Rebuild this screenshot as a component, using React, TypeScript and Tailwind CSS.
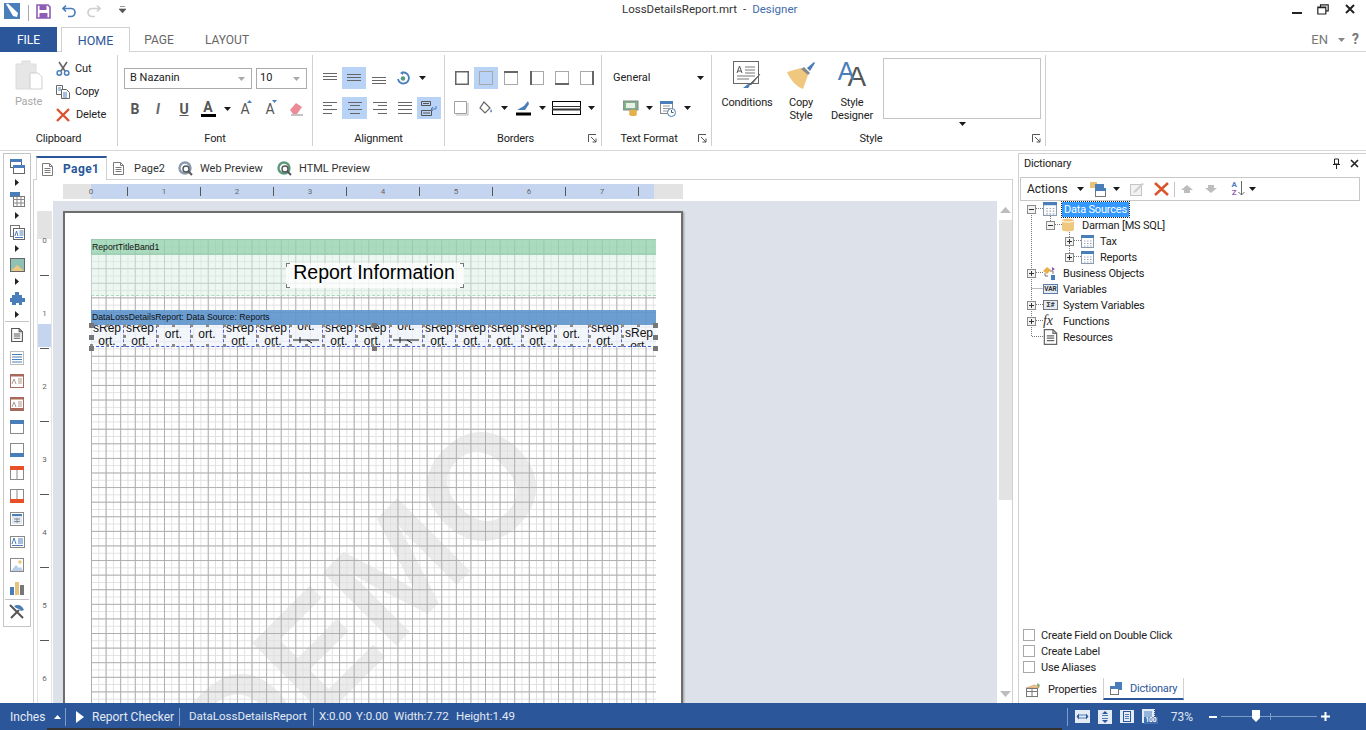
import React from "react";

const B = "#4a7ebb";

const Caret = ({ c = "#1a1a1a" }: { c?: string }) => (
  <svg width="7" height="4" viewBox="0 0 7 4"><path d="M0 0h7L3.5 4z" fill={c} /></svg>
);

const Launcher = () => (
  <svg width="9" height="9" viewBox="0 0 9 9"><path d="M.5 8V.5H8M3 3l5 5M8 4.5V8H4.5" fill="none" stroke="#555" /></svg>
);

const Lines = ({ rows, w = 16, h = 14 }: { rows: number[][]; w?: number; h?: number }) => (
  <svg width={w} height={h} viewBox={`0 0 ${w} ${h}`}>
    {rows.map((r, i) => <path key={i} d={`M${r[0]} ${r[2] + 0.5}H${r[1]}`} stroke="#666" />)}
  </svg>
);

const BorderBox = ({ side }: { side: string }) => (
  <svg width="14" height="14" viewBox="0 0 14 14">
    <rect x=".5" y=".5" width="13" height="13" fill="none" stroke={side === "all" ? "#666" : "#a8a8a8"} strokeWidth={side === "all" ? 2 : 1} />
    {side === "t" && <path d="M0 1h14" stroke="#666" strokeWidth="2" />}
    {side === "l" && <path d="M1 0v14" stroke="#666" strokeWidth="2" />}
    {side === "b" && <path d="M0 13h14" stroke="#666" strokeWidth="2" />}
    {side === "r" && <path d="M13 0v14" stroke="#666" strokeWidth="2" />}
  </svg>
);

const Win = ({ kind }: { kind: string }) => {
  const blue = "#4a7ebb";
  const red = "#e8502a";
  return (
    <svg width="14" height="14" viewBox="0 0 14 14">
      <rect x=".5" y=".5" width="13" height="13" fill="#fff" stroke="#8a8a8a" />
      {kind === "h" && <rect width="14" height="4" fill={blue} />}
      {kind === "f" && <rect y="10" width="14" height="4" fill={blue} />}
      {kind === "rh" && <><rect width="14" height="4" fill={red} /><path d="M7 4v10" stroke="#8a8a8a" /></>}
      {kind === "rf" && <><rect y="10" width="14" height="4" fill={red} /><path d="M7 0v10" stroke="#8a8a8a" /></>}
      {kind === "t" && <><rect x="2" y="2" width="10" height="10" fill="#dfe8f4" /><rect x="2" y="2" width="10" height="2" fill={blue} /><path d="M4 7h6M4 9.5h6M7 6v5" stroke="#8a8a8a" /></>}
    </svg>
  );
};

const Doc = ({ w = 11, h = 13, c = "#7a7a7a" }: { w?: number; h?: number; c?: string }) => (
  <svg width={w} height={h} viewBox="0 0 11 13">
    <path d="M.5.5h7l3 3v9H.5z" fill="#fff" stroke={c} />
    <path d="M7.5.5v3h3M2.5 5.5h6M2.5 7.5h6M2.5 9.5h6" fill="none" stroke={c} />
  </svg>
);

const Globe = ({ c }: { c: string }) => (
  <svg width="15" height="15" viewBox="0 0 15 15">
    <circle cx="7" cy="7" r="5.5" fill="#fff" stroke={c} strokeWidth="2.4" />
    <circle cx="8" cy="8" r="3" fill="#fff" stroke="#555" strokeWidth="1.4" />
    <path d="M10.5 10.5l3.5 3.5" stroke="#555" strokeWidth="2" />
  </svg>
);

const TableIc = ({ s = 13 }: { s?: number }) => (
  <svg width={s} height={s} viewBox="0 0 13 13">
    <rect x=".5" y=".5" width="12" height="12" fill="#fff" stroke="#8a9bb0" />
    <rect width="13" height="3" fill="#4a7ebb" />
    <path d="M3 6h1.5M6 6h1.5M9 6h1.5M3 8.5h1.5M6 8.5h1.5M9 8.5h1.5M3 11h1.5M6 11h1.5M9 11h1.5" stroke="#9aa8b8" />
  </svg>
);

const Exp = ({ minus }: { minus?: boolean }) => (
  <svg width="9" height="9" viewBox="0 0 9 9" className="shrink-0">
    <rect x=".5" y=".5" width="8" height="8" fill="#f2f2f2" stroke="#8a8a8a" />
    <path d="M2 4.5h5" stroke="#333" />
    {!minus && <path d="M4.5 2v5" stroke="#333" />}
  </svg>
);

function Group({ w, label, launcher, children }: { w: string; label: string; launcher?: boolean; children: React.ReactNode }) {
  return (
    <div className={`${w} h-[98px] flex flex-col shrink-0`}>
      <div className="h-[76px] overflow-visible">{children}</div>
      <div className={`relative h-[22px] flex items-center justify-center text-[#222] ${launcher ? "pr-[15px]" : ""}`}>
        {label}
        {launcher && <span className="absolute right-[4px] top-[6px] flex"><Launcher /></span>}
      </div>
    </div>
  );
}

const Sep = () => <div className="w-px h-[91px] mt-[3px] bg-[#d0d0d0] shrink-0" />;

function Cell({ w, on, children }: { w: string; on?: boolean; children: React.ReactNode }) {
  return <div className={`${w} h-[22px] flex items-center justify-center shrink-0 ${on ? "bg-[#b9d3f7]" : ""}`}>{children}</div>;
}

function TitleBar() {
  return (
    <div className="h-[27px] flex items-start shrink-0">
      <div className="w-[622px] flex items-start">
        <svg width="16" height="16" viewBox="0 0 16 16" className="ml-[4px] mt-[3px]">
          <rect width="16" height="16" fill="#4a7ebb" />
          <path d="M2 1l2-.5L14 10l-1 4-4-1z" fill="#fff" />
        </svg>
        <div className="w-px h-[16px] bg-[#a8a8a8] ml-[8px] mt-[5px]" />
        <svg width="15" height="15" viewBox="0 0 15 15" className="ml-[7px] mt-[4px]">
          <path d="M1 1h11l2 2v11H1z" fill="#fff" stroke="#8d5cb5" strokeWidth="1.6" />
          <rect x="3.5" y="1" width="7" height="5" fill="#8d5cb5" />
          <rect x="3.5" y="9" width="8" height="5" fill="#8d5cb5" />
        </svg>
        <svg width="15" height="14" viewBox="0 0 15 14" className="ml-[11px] mt-[4px]">
          <path d="M4 1.5L1 4.5l3 3M1.5 4.5H9a4 4 0 0 1 0 8H6" fill="none" stroke="#4a7ebb" strokeWidth="1.7" />
        </svg>
        <svg width="15" height="14" viewBox="0 0 15 14" className="ml-[9px] mt-[4px]">
          <path d="M11 1.5l3 3-3 3M13.5 4.5H6a4 4 0 0 0 0 8h3" fill="none" stroke="#cfcfcf" strokeWidth="1.7" />
        </svg>
        <svg width="7" height="7" viewBox="0 0 7 7" className="ml-[18px] mt-[6px]">
          <path d="M1 .5h5M0 3h7L3.5 7z" stroke="#555" fill="#555" strokeWidth=".6" />
        </svg>
      </div>
      <div className="text-[11.5px] leading-[19px] text-[#333] whitespace-pre">LossDetailsReport.mrt<span className="ml-[6px]">-</span><span className="ml-[6px] text-[#3f6cab]">Designer</span></div>
      <div className="ml-auto flex items-start">
        <div className="w-[10px] h-[2px] bg-[#222] mt-[12px]" />
        <svg width="12" height="11" viewBox="0 0 12 11" className="ml-[15px] mt-[4px]"><path d="M3.5 2.5V.8h7.7v6H9M.8 3h8v7H.8zM.8 3.6h8" fill="none" stroke="#222" strokeWidth="1.2" /></svg>
        <svg width="10" height="10" viewBox="0 0 10 10" className="ml-[16px] mr-[11px] mt-[4px]"><path d="M1 1l8 8M9 1l-8 8" stroke="#222" strokeWidth="2" /></svg>
      </div>
    </div>
  );
}

function TabsRow() {
  return (
    <div className="h-[25px] flex border-b border-[#d4d4d4] shrink-0 text-[12px] text-[#666]">
      <div className="w-[57px] h-[25px] pt-[1px] bg-[#2b579a] text-white flex items-center justify-center">FILE</div>
      <div className="ml-[4px] w-[69px] h-[25px] pt-[2px] bg-white border border-b-0 border-[#d0d0d0] text-[#2b579a] text-[12.5px] flex items-center justify-center">HOME</div>
      <div className="ml-[7px] w-[44px] pt-[1px] flex items-center justify-center">PAGE</div>
      <div className="ml-[23px] w-[46px] pt-[1px] flex items-center justify-center">LAYOUT</div>
      <div className="ml-auto flex items-center pt-[1px]">
        <span className="text-[#777] text-[13px]">EN</span>
        <span className="ml-[10px] flex"><Caret c="#888" /></span>
        <span className="ml-[7px] mr-[7px] font-bold text-[14px] text-[#777]">?</span>
      </div>
    </div>
  );
}

function Ribbon() {
  return (
    <div className="h-[99px] flex border-b border-[#d8d8d8] shrink-0 text-[11px] tracking-[-0.15px]">
      <Group w="w-[117px]" label="Clipboard">
        <div className="flex">
          <div className="ml-[12px] w-[33px] flex flex-col items-center pt-[8px]">
            <svg width="28" height="30" viewBox="0 0 28 30">
              <path d="M1 4h6V1h8v3h6v9h-6v16H1z" fill="#e6e6e6" stroke="#dcdcdc" />
              <path d="M15 13h8l4 4v12H15z" fill="#fff" stroke="#d0d0d0" />
            </svg>
            <span className="mt-[4px] text-[#a8a8a8]">Paste</span>
          </div>
          <div className="ml-[11px] pt-[5px] text-[#222]">
            <div className="h-[23px] flex items-center gap-[5px]">
              <svg width="14" height="15" viewBox="0 0 14 15"><path d="M3 1l6 9M11 1L5 10" stroke="#666" strokeWidth="1.6" /><circle cx="3.3" cy="12" r="2.2" fill="none" stroke={B} strokeWidth="1.5" /><circle cx="10.7" cy="12" r="2.2" fill="none" stroke={B} strokeWidth="1.5" /></svg>
              <span className="pt-[2px]">Cut</span>
            </div>
            <div className="h-[23px] flex items-center gap-[5px]">
              <svg width="14" height="14" viewBox="0 0 14 14"><path d="M.5.5h6v9h-6z" fill="#fff" stroke="#666" /><path d="M5.5 4.5h5l3 3v6h-8z" fill="#fff" stroke="#666" /><path d="M7 8h4M7 10h4M7 12h4M2 3h3M2 5h3" stroke="#4a7ebb" /></svg>
              <span className="pt-[2px]">Copy</span>
            </div>
            <div className="h-[23px] flex items-center gap-[6px]">
              <svg width="14" height="14" viewBox="0 0 14 14"><path d="M1 1l12 12M13 1L1 13" stroke="#d9552d" strokeWidth="2.4" /></svg>
              <span className="pt-[2px]">Delete</span>
            </div>
          </div>
        </div>
      </Group>
      <Sep />
      <Group w="w-[194px]" label="Font">
        <div className="pl-[6px] pt-[16px]">
          <div className="flex gap-[4px]">
            <div className="w-[128px] h-[21px] border border-[#ababab] flex items-center justify-between pl-[5px] pr-[6px] text-[#222] tracking-normal">B Nazanin <Caret c="#aaa" /></div>
            <div className="w-[51px] h-[21px] border border-[#ababab] flex items-center justify-between pl-[3px] pr-[6px] text-[#222] tracking-normal">10 <Caret c="#aaa" /></div>
          </div>
          <div className="flex mt-[9px] text-[14px] text-[#555]">
            <Cell w="w-[22px]"><b>B</b></Cell>
            <Cell w="w-[24px]"><i className="font-bold text-[#666]">I</i></Cell>
            <Cell w="w-[28px]"><span className="font-bold underline">U</span></Cell>
            <Cell w="w-[20px]"><span className="flex flex-col items-center leading-[12px] font-bold">A<span className="w-[15px] h-[3px] bg-black mt-[1px]" /></span></Cell>
            <Cell w="w-[18px]"><Caret /></Cell>
            <Cell w="w-[18px]"><span className="relative text-[14px]">A<span className="absolute -right-[3px] top-[1px] flex"><svg width="5" height="3" viewBox="0 0 5 3"><path d="M2.5 0L5 3H0z" fill={B} /></svg></span></span></Cell>
            <Cell w="w-[32px]"><span className="relative text-[14px]">A<span className="absolute -right-[3px] top-[1px] flex"><svg width="5" height="3" viewBox="0 0 5 3"><path d="M2.5 3L5 0H0z" fill={B} /></svg></span></span></Cell>
            <Cell w="w-[20px]">
              <svg width="15" height="14" viewBox="0 0 15 14"><path d="M1 8l6-7 6 4-5 7H4z" fill="#ec8a97" /><path d="M2 13h12" stroke="#888" /></svg>
            </Cell>
          </div>
        </div>
      </Group>
      <Sep />
      <Group w="w-[131px]" label="Alignment">
        <div className="pl-[4px] pt-[15px]">
          <div className="flex">
            <Cell w="w-[25px]"><Lines rows={[[1, 15, 2], [1, 15, 5], [1, 15, 8]]} /></Cell>
            <Cell w="w-[24px]" on><Lines rows={[[1, 15, 3], [1, 15, 6], [1, 15, 9]]} /></Cell>
            <Cell w="w-[25px]"><Lines rows={[[1, 15, 6], [1, 15, 9], [1, 15, 12]]} /></Cell>
            <Cell w="w-[24px]">
              <svg width="14" height="14" viewBox="0 0 14 14"><path d="M7 1.5A5.5 5.5 0 1 1 2 8" fill="none" stroke={B} strokeWidth="1.8" /><path d="M7 0v4L4 2z" fill={B} /><circle cx="7" cy="7.5" r="2.3" fill="#5a9a8a" /></svg>
            </Cell>
            <Cell w="w-[14px]"><Caret /></Cell>
          </div>
          <div className="flex mt-[8px]">
            <Cell w="w-[25px]"><Lines rows={[[1, 15, 1], [1, 10, 4], [1, 15, 8], [1, 10, 12]]} /></Cell>
            <Cell w="w-[25px]" on><Lines rows={[[1, 15, 1], [3, 13, 4], [1, 15, 8], [3, 13, 12]]} /></Cell>
            <Cell w="w-[25px]"><Lines rows={[[1, 15, 1], [6, 15, 4], [1, 15, 8], [6, 15, 12]]} /></Cell>
            <Cell w="w-[25px]"><Lines rows={[[1, 15, 1], [1, 15, 4], [1, 15, 8], [1, 15, 12]]} /></Cell>
            <Cell w="w-[24px]" on>
              <svg width="16" height="15" viewBox="0 0 16 15"><path d="M.5.5h9v4h-9zM.5 9.500h10v5H.5z" fill="none" stroke="#555" /><path d="M2 2.500h6M2 12h7" stroke="#555" /><path d="M15 5v3h-5M12 6l-2 2 2 2" fill="none" stroke={B} /></svg>
            </Cell>
          </div>
        </div>
      </Group>
      <Sep />
      <Group w="w-[156px]" label="Borders" launcher>
        <div className="pl-[4px] pt-[15px]">
          <div className="flex">
            <Cell w="w-[25px]"><BorderBox side="all" /></Cell>
            <Cell w="w-[24px]" on><BorderBox side="none" /></Cell>
            <Cell w="w-[26px]"><BorderBox side="t" /></Cell>
            <Cell w="w-[25px]"><BorderBox side="l" /></Cell>
            <Cell w="w-[25px]"><BorderBox side="b" /></Cell>
            <Cell w="w-[25px]"><BorderBox side="r" /></Cell>
          </div>
          <div className="flex mt-[8px]">
            <Cell w="w-[25px]">
              <svg width="15" height="15" viewBox="0 0 15 15"><path d="M.5.5h12v12H.5z" fill="#fff" stroke="#a0a0a0" /><path d="M14 2v12H2" fill="none" stroke="#bbb" /></svg>
            </Cell>
            <Cell w="w-[23px]">
              <svg width="15" height="14" viewBox="0 0 15 14"><path d="M6 1l6 6-5 5-5-5z" fill="#fff" stroke="#666" strokeWidth="1.2" /><path d="M13 8c1 2 1.500 3 0 3.500C12 11 12 10 13 8z" fill={B} /></svg>
            </Cell>
            <Cell w="w-[14px]"><Caret /></Cell>
            <Cell w="w-[24px]">
              <svg width="15" height="16" viewBox="0 0 15 16"><path d="M1 10l7-4 4-5 1 3-4 6H3z" fill={B} /><rect y="12.500" width="15" height="3" fill="#000" /></svg>
            </Cell>
            <Cell w="w-[14px]"><Caret /></Cell>
            <Cell w="w-[35px]">
              <svg width="29" height="14" viewBox="0 0 29 14"><rect x=".5" y=".5" width="28" height="13" fill="#fff" stroke="#000" /><path d="M0 5.500h29" stroke="#333" /><path d="M0 8.500h29" stroke="#333" strokeWidth="2" /></svg>
            </Cell>
            <Cell w="w-[14px]"><Caret /></Cell>
          </div>
        </div>
      </Group>
      <Sep />
      <Group w="w-[109px]" label="Text Format" launcher>
        <div className="pt-[15px]">
          <div className="h-[22px] pl-[11px] pr-[7px] flex items-center justify-between text-[#222] tracking-normal">General <Caret /></div>
          <div className="flex mt-[8px] pl-[18px]">
            <Cell w="w-[22px]">
              <svg width="16" height="16" viewBox="0 0 16 16"><rect x="0" y="1" width="15" height="9" fill="#7fb08a" stroke="#888" /><rect x="3" y="3" width="9" height="5" fill="#e8f0e8" /><ellipse cx="10" cy="11.500" rx="4" ry="2" fill="#e4b14a" /><ellipse cx="10" cy="14" rx="4" ry="2" fill="#e4b14a" /></svg>
            </Cell>
            <Cell w="w-[14px]"><Caret /></Cell>
            <Cell w="w-[24px]">
              <svg width="16" height="17" viewBox="0 0 16 17"><rect x=".5" y="1.500" width="12" height="12" fill="#fff" stroke="#888" /><rect y="1" width="13" height="3" fill={B} /><path d="M3 6h7M3 8.500h7M3 11h7" stroke="#999" /><circle cx="11.500" cy="12.500" r="4" fill="#fff" stroke={B} /><path d="M11.500 10v2.500h2" fill="none" stroke="#555" /></svg>
            </Cell>
            <Cell w="w-[14px]"><Caret /></Cell>
          </div>
        </div>
      </Group>
      <Sep />
      <Group w="w-[333px]" label="Style" launcher>
        <div className="flex pt-[6px] pl-[5px] text-[#222]">
          <div className="w-[60px] flex flex-col items-center leading-[13px] text-center pt-[3px]">
            <svg width="28" height="29" viewBox="0 0 28 29"><rect x=".5" y=".5" width="25" height="22" fill="#fff" stroke="#666" /><path d="M12 6h10M12 9h10M12 12h10M4 15h18M4 18h12" stroke="#777" /><path d="M4 12l2.500-7L9 12M5 10h3" fill="none" stroke="#555" /><path d="M27 13l-9 9-2 2 3-1z" fill="#666" stroke="#666" /><path d="M16 23c-2 0-3 2-6 4h5c1-1 2-2 1-4z" fill={B} /></svg>
            <span className="mt-[6px]">Conditions</span>
          </div>
          <div className="w-[48px] flex flex-col items-center leading-[13px] text-center pt-[3px]">
            <svg width="30" height="29" viewBox="0 0 30 29"><path d="M1 11l14-4 7 7-5 14C11 26 4 19 1 11z" fill="#f0c77e" /><path d="M15 8l3-2 6 6-2 2z" fill="#888" /><path d="M21 7l7-6 1 1-5 8z" fill={B} /></svg>
            <span className="mt-[6px]">Copy<br />Style</span>
          </div>
          <div className="w-[54px] flex flex-col items-center leading-[13px] text-center pt-[2px]">
            <div className="h-[30px] w-[30px] flex items-end justify-center font-['Liberation_Sans',sans-serif] tracking-normal">
              <span className="text-[25px] leading-[25px] text-[#4a7ebb] -mr-[7px] -translate-y-[6px]">A</span>
              <span className="text-[28px] leading-[26px] text-[#555]">A</span>
            </div>
            <span className="mt-[6px]">Style<br />Designer</span>
          </div>
          <div className="ml-[4px] flex flex-col items-center">
            <div className="w-[158px] h-[61px] border border-[#c4c4c4] bg-white" />
            <span className="mt-[3px] flex"><Caret /></span>
          </div>
        </div>
      </Group>
      <Sep />
    </div>
  );
}

const IconArrow = () => (
  <div className="h-[9px] flex items-center justify-center">
    <svg width="4" height="7" viewBox="0 0 4 7"><path d="M0 0l4 3.500L0 7z" fill="#222" /></svg>
  </div>
);

const TI = ({ children }: { children: React.ReactNode }) => <div className="h-[23px] flex items-center justify-center">{children}</div>;
const TA = ({ children }: { children: React.ReactNode }) => <><div className="h-[24px] flex items-center justify-center">{children}</div><IconArrow /></>;

function LeftBar() {
  const brown = "#a8695a";
  return (
    <div className="w-[33px] shrink-0 pl-[3px] pt-[3px]">
      <div className="w-[28px] h-[474px] border border-[#c4c4c4] -mt-px">
        <TA><svg width="15" height="15" viewBox="0 0 15 15"><rect x=".5" y=".5" width="11" height="8" fill="#fff" stroke="#666" /><rect width="12" height="3" fill={B} /><rect x="3.500" y="6.500" width="11" height="8" fill="#fff" stroke="#666" /><rect x="3" y="6" width="12" height="3" fill={B} /></svg></TA>
        <TA><svg width="15" height="15" viewBox="0 0 15 15"><rect width="10" height="5" fill={B} /><rect x="3.500" y="4.500" width="11" height="10" fill="#fff" stroke="#777" /><path d="M3 7.500h12M3 11h12M7 5v10M11 5v10" stroke="#888" /></svg></TA>
        <TA><svg width="15" height="15" viewBox="0 0 15 15"><rect x=".5" y=".5" width="9" height="11" fill="#fff" stroke="#777" /><rect x="3.500" y="3.500" width="11" height="11" fill="#fff" stroke="#666" /><path d="M5 11l1.500-5L8 11M9.500 6h4M9.500 8h4M9.500 10h4M5 12.500h8" fill="none" stroke={B} /></svg></TA>
        <TA><svg width="15" height="14" viewBox="0 0 15 14"><rect x=".5" y=".5" width="14" height="13" fill="#8fc1b5" stroke="#666" /><path d="M1 13l6-6 7 6z" fill="#f0c77e" /></svg></TA>
        <TA><svg width="15" height="15" viewBox="0 0 15 15"><path d="M5 1h4v3h3v3h3v4h-3v3H9v-2H6v2H2v-3H0V7h2V4h3z" fill={B} /></svg></TA>
        <div className="h-px bg-[#c4c4c4] mx-[1px] mt-[2px] mb-[1px]" />
        <TI><Doc w={14} h={14} c="#555" /></TI>
        <TI><svg width="14" height="14" viewBox="0 0 14 14"><rect x=".5" y=".5" width="13" height="13" fill="#fff" stroke="#777" strokeDasharray="1 1" /><path d="M2 3.500h10M2 6h10M2 8.500h10M2 11h10" stroke={B} /></svg></TI>
        {[0, 1].map((i) => (
          <TI key={i}><svg width="14" height="14" viewBox="0 0 14 14"><rect x=".5" y=".5" width="13" height="13" fill="#fff" stroke={brown} /><rect width="14" height="2.500" fill={brown} />{i === 1 && <rect y="11" width="14" height="3" fill={brown} />}<path d="M2 10l2-5 2 5M8 5h4M8 7h4M8 9h4" fill="none" stroke="#a89a94" /></svg></TI>
        ))}
        <TI><Win kind="h" /></TI>
        <TI><Win kind="f" /></TI>
        <TI><Win kind="rh" /></TI>
        <TI><Win kind="rf" /></TI>
        <TI><Win kind="t" /></TI>
        <TI><svg width="15" height="12" viewBox="0 0 15 12"><rect x=".5" y=".5" width="14" height="11" fill="#fff" stroke="#888" /><path d="M2 8l2-6 2 6M8 3h5M8 5h5M8 7h5M2 9.500h11" fill="none" stroke={B} /></svg></TI>
        <TI><svg width="14" height="14" viewBox="0 0 14 14"><rect x=".5" y=".5" width="13" height="13" fill="#fff" stroke="#888" /><circle cx="10" cy="4" r="1.800" fill="#f0c77e" /><path d="M1 13l5-6 3 3 2-1 2 4z" fill="#b9cfe8" /></svg></TI>
        <TI><svg width="14" height="14" viewBox="0 0 14 14"><rect y="6" width="4" height="8" fill={B} /><rect x="5" y="1" width="4" height="13" fill="#e9c27a" /><rect x="10" y="4" width="4" height="10" fill="#777" /></svg></TI>
        <div className="h-px bg-[#c4c4c4] mx-[1px]" />
        <TI><svg width="16" height="15" viewBox="0 0 16 15"><path d="M2 14L10 6M1 1l13 13" stroke="#555" strokeWidth="2" /><path d="M5 2c4-2 8-1 10 4l-3 1-2-2-3-1z" fill={B} /></svg></TI>
      </div>
    </div>
  );
}

type Kind = "two" | "one" | "line" | "low";
const cells: Kind[] = ["two", "two", "one", "one", "two", "two", "line", "two", "two", "line", "two", "two", "two", "two", "one", "two", "low"];
const cellW = ["w-[33px]", "w-[33px]", "w-[34px]", "w-[33px]", "w-[33px]", "w-[33px]", "w-[33px]", "w-[33px]", "w-[34px]", "w-[33px]", "w-[33px]", "w-[33px]", "w-[33px]", "w-[33px]", "w-[34px]", "w-[33px]", "w-[34px]"];

const H = ({ cls }: { cls: string }) => <span className={`absolute w-[3px] h-[3px] bg-[#8a8a8a] z-10 ${cls}`} />;

function DataCell({ k, w, last }: { k: Kind; w: string; last: boolean }) {
  return (
    <div className={`relative ${w} h-[22px] shrink-0`}>
      <div className={`h-[22px] flex flex-col items-center overflow-hidden bg-[#f1f6fb]/85 text-[12px] leading-[13px] text-[#111] ${last ? "" : "border-r border-dashed border-[#5a5ae0]"} ${k === "two" || k === "one" ? "justify-center" : "justify-start"}`}>
        {k === "two" && <><span className="-mt-[3px]">sRep</span><span>ort.</span></>}
        {k === "one" && <span className="-mt-[3px]">ort.</span>}
        {k === "line" && (
          <>
            <span className="-mt-[5px]">ort.</span>
            <svg width="28" height="8" viewBox="0 0 28 8" className="mt-[3px] shrink-0"><path d="M1 4h26M8 1v6M20 7l-5-3" stroke="#111" fill="none" /></svg>
          </>
        )}
        {k === "low" && <><span className="mt-[2px]">sRep</span><span>ort.</span></>}
      </div>
      <H cls="-left-[1px] -top-[1px]" />
      <H cls="left-[15px] -top-[1px]" />
      <H cls="-left-[1px] top-[10px]" />
      <H cls="-left-[1px] bottom-0" />
      <H cls="left-[15px] bottom-0" />
    </div>
  );
}

const Big = ({ cls }: { cls: string }) => <span className={`absolute w-[5px] h-[5px] bg-[#777] z-20 ${cls}`} />;

function Bracket({ cls }: { cls: string }) {
  return <span className={`absolute w-[4px] h-[4px] border-[#777] ${cls}`} />;
}

function GridArea() {
  return (
    <div className="relative w-[565px] h-[600px]">
      <div className="absolute inset-0 overflow-hidden">
        <div className="absolute left-[48px] top-[290px] w-[450px] h-[150px] -rotate-45 text-center font-bold text-[150px] leading-[150px] text-[#ebebeb] whitespace-nowrap font-['Liberation_Sans',sans-serif]">DEMO</div>
        <div className="absolute inset-0 bg-[linear-gradient(to_right,#aeaeae_1px,transparent_1px),linear-gradient(to_bottom,#aeaeae_1px,transparent_1px),linear-gradient(to_right,#e0e0e0_1px,transparent_1px),linear-gradient(to_bottom,#e0e0e0_1px,transparent_1px)] bg-[size:14.6px_14.6px,14.6px_14.6px,7.3px_7.3px,7.3px_7.3px]" />
      </div>
      <div className="relative font-['Liberation_Sans',sans-serif]">
        <div className="h-[16px] bg-[rgba(150,210,175,0.8)] text-[8.7px] leading-[16px] pl-[1px] text-[#111]">ReportTitleBand1</div>
        <div className="h-[41px] bg-[rgba(220,240,228,0.5)] border-b border-dashed border-[#a9d8bc] pl-[195px] pt-[8px]">
          <div className="relative w-[178px] h-[25px] pr-[2px] bg-white/75 text-[19.5px] leading-[18px] text-center text-black">
            Report Information
            <Bracket cls="left-0 top-0 border-l border-t" />
            <Bracket cls="right-0 top-0 border-r border-t" />
            <Bracket cls="left-0 bottom-0 border-l border-b" />
            <Bracket cls="right-0 bottom-0 border-r border-b" />
          </div>
        </div>
        <div className="h-[14px]" />
        <div className="h-[15px] bg-[rgba(95,150,205,0.92)] text-[8.7px] leading-[15px] pl-[1px] text-[#111]">DataLossDetailsReport: Data Source: Reports</div>
        <div className="relative">
          <div className="flex w-[565px]">
            {cells.map((k, i) => <DataCell key={i} k={k} w={cellW[i]} last={i === cells.length - 1} />)}
          </div>
          <div className="absolute left-0 right-0 top-[21px] border-b border-dashed border-[#3f5fe0]" />
          <Big cls="-left-[2px] -top-[2px]" />
          <Big cls="-left-[2px] top-[10px]" />
          <Big cls="-left-[2px] top-[21px]" />
          <Big cls="left-[281px] -top-[2px]" />
          <Big cls="left-[281px] top-[21px]" />
          <Big cls="-right-[2px] -top-[2px]" />
          <Big cls="-right-[2px] top-[10px]" />
          <Big cls="-right-[2px] top-[21px]" />
        </div>
      </div>
    </div>
  );
}

function Center() {
  return (
    <div className="w-[980px] shrink-0 flex flex-col">
      <div className="h-[28px] flex pt-[5px] pl-[3px] text-[11px] text-[#333] shrink-0">
        <div className="relative z-10 w-[71px] h-[24px] bg-white border-x border-[#d0d0d0] border-t-2 border-t-[#2b579a] flex items-center pl-[5px] gap-[10px] font-bold text-[12px] tracking-[0.4px] text-[#2b579a]"><Doc />Page1</div>
        <div className="flex items-center h-[24px] pl-[6px] gap-[10px] w-[71px]"><Doc /><span className="pt-[2px]">Page2</span></div>
        <div className="flex items-center h-[24px] gap-[7px] w-[99px]"><Globe c="#8a9bb0" /><span className="pt-[2px]">Web Preview</span></div>
        <div className="flex items-center h-[24px] gap-[7px]"><Globe c="#5a9a7a" /><span className="pt-[2px]">HTML Preview</span></div>
      </div>
      <div className="flex-1 min-h-0 flex flex-col border-l border-r border-t border-[#d0d0d0]">
        <div className="h-[21px] pt-[4px] pl-[29px] shrink-0">
          <div className="relative w-[620px] h-[15px] flex pl-[25px] overflow-hidden bg-[#e3e3e3] text-[8px] leading-[15px] text-[#666]">
            <div className="absolute left-[28px] top-0 w-[563px] h-[15px] bg-[#c5d5ef]" />
            {[0, 1, 2, 3, 4, 5, 6, 7].map((n) => (
              <div key={n} className="relative w-[73px] h-[15px] shrink-0 flex">
                <span className="w-[6px] text-center">{n}</span>
                <span className="ml-[33px] mt-[3px] w-px h-[9px] bg-[#555]" />
              </div>
            ))}
          </div>
        </div>
        <div className="flex-1 min-h-0 flex">
          <div className="w-[19px] pl-[3px] pt-[10px] shrink-0">
            <div className="relative w-[15px] h-[492px] border-x border-[#e4e4e4] pt-[26px] overflow-hidden text-[8px] text-[#666]">
              <div className="absolute left-0 top-0 w-full h-[28px] bg-[#e3e3e3]" />
              <div className="absolute left-0 top-[113px] w-full h-[23px] bg-[#c5d5ef]" />
              {[0, 1, 2, 3, 4, 5, 6].map((n) => (
                <div key={n} className="relative h-[73px] flex flex-col items-center">
                  <span className="h-[7px] leading-[7px]">{n}</span>
                  <span className="mt-[31px] w-[9px] h-px bg-[#555]" />
                </div>
              ))}
            </div>
          </div>
          <div className="w-[944px] bg-[#dde1e9] pl-[10px] pt-[10px] overflow-hidden shrink-0">
            <div className="w-[620px] h-[620px] bg-white border-2 border-[#6e6e6e] pl-[26px] pt-[26px] shadow-[1px_1px_2px_#999]">
              <GridArea />
            </div>
          </div>
          <div className="w-[15px] flex flex-col items-center shrink-0 pt-[6px] ml-px">
            <svg width="11" height="6" viewBox="0 0 11 6"><path d="M5.500 0L11 6H0z" fill="#bdbdbd" /></svg>
            <div className="w-[13px] h-[280px] mt-[7px] bg-[#e3e3e3]" />
            <div className="mt-auto mb-[6px] flex"><svg width="11" height="6" viewBox="0 0 11 6"><path d="M5.500 6L11 0H0z" fill="#bdbdbd" /></svg></div>
          </div>
        </div>
      </div>
    </div>
  );
}

function TreeRow({ pad, exp, minus, icon, iconGap, text, sel, textGap }: { pad: string; exp?: boolean; minus?: boolean; icon: React.ReactNode; iconGap: string; text: string; sel?: boolean; textGap: string }) {
  return (
    <div className={`h-[16px] flex items-center relative ${pad}`}>
      <span className="w-[9px] h-[9px] flex shrink-0">{exp && <Exp minus={minus} />}</span>
      <span className={`flex shrink-0 ${iconGap}`}>{icon}</span>
      <span className={`${textGap} ${sel ? "bg-[#3399ff] text-white outline-1 outline-dotted outline-[#222] px-[2px] h-[15px] leading-[15px] -ml-[1px]" : "pt-[2px]"}`}>{text}</span>
    </div>
  );
}

function Dictionary() {
  return (
    <div className="w-[353px] shrink-0 pl-[5px] pt-[2px]">
      <div className="h-[550px] border-l border-t border-[#d0d0d0] flex flex-col text-[11px] tracking-[-0.2px] text-[#222]">
        <div className="h-[23px] flex items-center pl-[5px] pr-[7px] pb-[4px] shrink-0">
          <span className="pt-[2px]">Dictionary</span>
          <svg width="9" height="11" viewBox="0 0 9 11" className="ml-auto"><path d="M2.500 1h4v5h-4zM1 6.500h7M4.500 7v4" fill="none" stroke="#222" /></svg>
          <svg width="9" height="9" viewBox="0 0 9 9" className="ml-[9px]"><path d="M1 1l7 7M8 1L1 8" stroke="#222" strokeWidth="1.600" /></svg>
        </div>
        <div className="ml-[1px] w-[340px] h-[24px] border border-[#c8c8c8] flex items-center shrink-0">
          <span className="pl-[6px] w-[56px] text-[12px] tracking-normal">Actions</span>
          <Caret />
          <svg width="16" height="15" viewBox="0 0 16 15" className="ml-[6px]"><rect width="7" height="6" fill="#e9c27a" /><rect x="5" y="2" width="9" height="4" fill="#4a7ebb" /><rect x="5.500" y="6.500" width="10" height="8" fill="#fff" stroke="#777" /><rect x="5" y="6" width="11" height="3" fill="#4a7ebb" /></svg>
          <span className="ml-[7px] flex"><Caret /></span>
          <svg width="14" height="14" viewBox="0 0 14 14" className="ml-[10px]"><rect x=".5" y="2.500" width="11" height="11" fill="#f2f2f2" stroke="#c4c4c4" /><path d="M4 9l8-8 2 1-8 8-3 1z" fill="#d0d0d0" /></svg>
          <svg width="15" height="14" viewBox="0 0 15 14" className="ml-[10px]"><path d="M1 1l13 12M14 1L1 13" stroke="#d9552d" strokeWidth="2.500" /></svg>
          <div className="w-px h-[15px] bg-[#c4c4c4] ml-[5px]" />
          <svg width="12" height="8" viewBox="0 0 12 8" className="ml-[6px]"><path d="M6 0l6 5H9v3H3V5H0z" fill="#bdbdbd" /></svg>
          <svg width="12" height="8" viewBox="0 0 12 8" className="ml-[12px]"><path d="M6 8l6-5H9V0H3v3H0z" fill="#bdbdbd" /></svg>
          <span className="ml-[13px] w-[16px] flex flex-col text-[8px] leading-[8px] font-bold text-center relative">
            <span className="text-[#4a7ebb] w-[8px]">A</span>
            <span className="text-[#8d5cb5] w-[8px]">Z</span>
            <svg width="7" height="15" viewBox="0 0 7 15" className="absolute left-[8px] top-0"><path d="M3.500 0v14M.5 11l3 3 3-3" fill="none" stroke="#666" /></svg>
          </span>
          <span className="ml-[3px] flex"><Caret /></span>
        </div>
        <div className="relative shrink-0">
          <svg width="80" height="145" viewBox="0 0 80 145" className="absolute left-0 -top-[1px]">
            <g stroke="#777" strokeDasharray="1 1" fill="none">
              <path d="M12.500 13V136.500H25" />
              <path d="M17 8.500h8M17 72.500h8M12.500 88.500h12M17 104.500h8M17 120.500h8" />
              <path d="M31.500 16V24M36 24.500h8" />
              <path d="M50.500 32V56M55 40.500h8M55 56.500h8" />
            </g>
          </svg>
          <div className="relative">
            <TreeRow pad="pl-[8px]" exp minus iconGap="ml-[7px]" icon={<TableIc s={14} />} text="Data Sources" sel textGap="ml-[5px]" />
            <TreeRow pad="pl-[27px]" exp minus iconGap="ml-[7px]" icon={<svg width="12" height="14" viewBox="0 0 12 14"><path d="M0 2.500C0 0 12 0 12 2.500v9C12 14 0 14 0 11.500z" fill="#f0c77e" /><path d="M0 3c2 1.500 10 1.500 12 0" fill="none" stroke="#fff" /></svg>} text="Darman [MS SQL]" textGap="ml-[8px]" />
            <TreeRow pad="pl-[46px]" exp iconGap="ml-[7px]" icon={<TableIc s={13} />} text="Tax" textGap="ml-[6px]" />
            <TreeRow pad="pl-[46px]" exp iconGap="ml-[7px]" icon={<TableIc s={13} />} text="Reports" textGap="ml-[6px]" />
            <TreeRow pad="pl-[8px]" exp iconGap="ml-[6px]" icon={<svg width="15" height="15" viewBox="0 0 15 15"><path d="M1 5l4-4 4 3-4 4z" fill="#e9b04a" /><path d="M8 5h3v3M6 10H3V7" fill="none" stroke="#777" /><path d="M10 1l3 2-3 2z" fill="#8d5cb5" /><path d="M9 9h4v5H9z" fill="#4a7ebb" /></svg>} text="Business Objects" textGap="ml-[6px]" />
            <TreeRow pad="pl-[8px]" iconGap="ml-[7px]" icon={<span className="w-[15px] h-[10px] bg-[#e4ebf4] border border-[#5f7da8] text-[6.500px] leading-[8px] font-bold text-center text-[#333] tracking-normal">VAR</span>} text="Variables" textGap="ml-[5px]" />
            <TreeRow pad="pl-[8px]" exp iconGap="ml-[7px]" icon={<span className="w-[15px] h-[10px] bg-[#e4ebf4] border border-[#777] text-[7px] leading-[8px] font-bold text-center text-[#333] tracking-normal">Σ#</span>} text="System Variables" textGap="ml-[5px]" />
            <TreeRow pad="pl-[8px]" exp iconGap="ml-[7px]" icon={<span className="w-[15px] text-[14px] leading-[14px] italic text-[#333] font-['Liberation_Serif',serif]">fx</span>} text="Functions" textGap="ml-[5px]" />
            <TreeRow pad="pl-[8px]" iconGap="ml-[7px]" icon={<Doc w={15} h={16} c="#666" />} text="Resources" textGap="ml-[5px]" />
          </div>
        </div>
        <div className="mt-auto pl-[4px] shrink-0">
          {["Create Field on Double Click", "Create Label", "Use Aliases"].map((t) => (
            <div key={t} className="h-[16px] flex items-center gap-[6px]">
              <span className="w-[12px] h-[12px] border border-[#a8a8a8] bg-white" /><span className="pt-[2px]">{t}</span>
            </div>
          ))}
        </div>
        <div className="h-[25px] mt-[3px] flex shrink-0 pl-[6px]">
          <div className="w-[78px] h-[22px] flex items-center gap-[7px]">
            <svg width="16" height="15" viewBox="0 0 16 15"><path d="M1 6l8-3 5 1v2H1z" fill="#f0c77e" stroke="#b88" strokeWidth=".5" /><path d="M12 1l3 2-2 3z" fill="#7fa05a" /><rect x="1.500" y="6.500" width="11" height="8" fill="#fff" stroke="#777" /><path d="M1 9.500h12M7 7v8" stroke="#777" /></svg>
            <span className="pt-[2px]">Properties</span>
          </div>
          <div className="w-[81px] h-[22px] border-x border-[#d0d0d0] border-b-2 border-b-[#2b579a] flex items-center pl-[6px] gap-[8px] text-[#2b579a]">
            <svg width="12" height="13" viewBox="0 0 12 13"><rect x="5" width="7" height="8" fill="#4a7ebb" /><rect x=".5" y="4.500" width="8" height="8" fill="#fff" stroke="#777" /><rect y="4" width="9" height="3" fill="#4a7ebb" /></svg>
            <span className="pt-[2px]">Dictionary</span>
          </div>
        </div>
      </div>
    </div>
  );
}

function StatusBar() {
  const sep = "w-px h-[18px] bg-[#7f9ccb]";
  return (
    <div className="relative h-[27px] bg-[#2b579a] flex items-center text-[11.5px] text-[#e3e9f3] shrink-0">
      <div className="pl-[10px] w-[65px] flex items-center justify-between pr-[4px] text-[12px]">Inches<svg width="7" height="4" viewBox="0 0 7 4"><path d="M3.500 0L7 4H0z" fill="#fff" /></svg></div>
      <div className={sep} />
      <svg width="8" height="12" viewBox="0 0 8 12" className="ml-[10px]"><path d="M0 0l8 6-8 6z" fill="#fff" /></svg>
      <span className="ml-[8px] w-[87px] text-[12px]">Report Checker</span>
      <div className={sep} />
      <span className="ml-[9px] w-[124px]">DataLossDetailsReport</span>
      <div className={sep} />
      <span className="ml-[5px] w-[37px]">X:0.00</span>
      <span className="w-[38px]">Y:0.00</span>
      <span className="w-[62px]">Width:7.72</span>
      <span>Height:1.49</span>
      <div className="ml-auto flex items-center">
        <div className={sep} />
        <svg width="15" height="13" viewBox="0 0 15 13" className="ml-[7px]"><rect width="15" height="13" fill="#e4ebf5" /><path d="M4 5h7M4 8h7" stroke="#4a7ebb" /><path d="M1.500 6.500L4 3.500v6zM13.500 6.500L11 3.500v6z" fill="#2b579a" /></svg>
        <svg width="14" height="14" viewBox="0 0 14 14" className="ml-[8px]"><rect width="14" height="14" fill="#e4ebf5" /><path d="M4 5.500h6M4 8.500h6" stroke="#4a7ebb" /><path d="M7 1L4 4h6zM7 13l-3-3h6z" fill="#2b579a" /></svg>
        <svg width="14" height="13" viewBox="0 0 14 13" className="ml-[8px]"><rect width="14" height="13" fill="#e4ebf5" /><rect x="3.500" y="1.500" width="7" height="10" fill="none" stroke="#2b579a" /><path d="M5 4.500h4M5 6.500h4M5 8.500h4" stroke="#4a7ebb" /></svg>
        <span className="relative ml-[8px] w-[16px] h-[15px] flex">
          <svg width="16" height="15" viewBox="0 0 16 15"><rect width="12" height="14" fill="#e4ebf5" /><path d="M2 3h8M2 5h8M2 7h8" stroke="#4a7ebb" /><path d="M12.500 0v9" stroke="#cfd9ea" strokeDasharray="1 1" /></svg>
          <span className="absolute left-[2px] bottom-0 w-[14px] h-[7px] bg-[#3f6fb0] text-[6.500px] leading-[7px] font-bold text-center text-white">100</span>
        </span>
        <span className="ml-[9px] w-[30px] text-center text-[12px] text-[#dfe6f1]">73%</span>
        <span className="ml-[12px] w-[8px] h-[2px] bg-white" />
        <span className="relative ml-[4px] w-[96px] h-px bg-[#7f9ccb] flex">
          <svg width="8" height="12" viewBox="0 0 8 12" className="absolute left-[31px] -top-[6px]"><path d="M0 0h8v8l-4 4-4-4z" fill="#fff" /></svg>
          <span className="absolute left-[49px] -top-[3px] w-px h-[7px] bg-[#7f9ccb]" />
        </span>
        <svg width="9" height="9" viewBox="0 0 9 9" className="ml-[4px] mr-[36px]"><path d="M0 4.500h9M4.500 0v9" stroke="#fff" strokeWidth="2" /></svg>
      </div>
      <div className="absolute left-[47px] bottom-0 w-[1015px] h-[2px] bg-[#333]" />
    </div>
  );
}

export default function App() {
  return (
    <div className="w-[1366px] h-[730px] overflow-hidden bg-white flex flex-col font-['Roboto','Liberation_Sans',sans-serif]">
      <TitleBar />
      <TabsRow />
      <Ribbon />
      <div className="flex-1 min-h-0 flex">
        <LeftBar />
        <Center />
        <Dictionary />
      </div>
      <StatusBar />
    </div>
  );
}
